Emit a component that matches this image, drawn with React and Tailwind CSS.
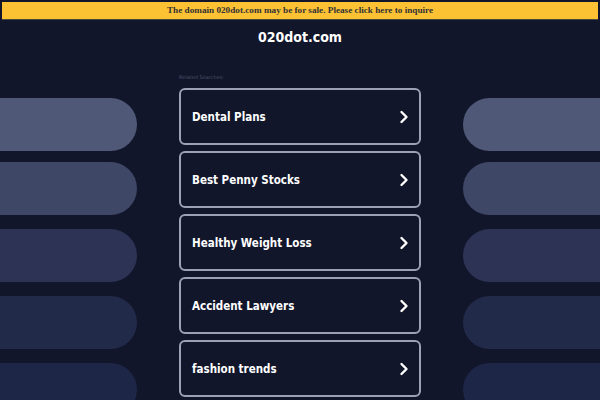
import React from 'react';

const searches = ['Dental Plans', 'Best Penny Stocks', 'Healthy Weight Loss', 'Accident Lawyers', 'fashion trends'];
const pillColors = ['bg-[#4f5877]', 'bg-[#3f4767]', 'bg-[#2c3355]', 'bg-[#222a4a]', 'bg-[#1e2647]'];

function Chevron() {
    return (
        <svg width="10" height="14" viewBox="0 0 10 14" fill="none">
            <path d="M2.5 2 L7.5 7 L2.5 12" stroke="white" strokeWidth="2.4" strokeLinecap="round" strokeLinejoin="round" />
        </svg>
    );
}

function PillColumn() {
    return (
        <div className="w-[250px] shrink-0 flex flex-col gap-[14px] pt-[98px]">
            {pillColors.map((c, i) => (
                <div key={i} className={`h-[53px] w-full rounded-full ${c} ${i === 1 ? '-mt-[3px]' : ''}`}></div>
            ))}
        </div>
    );
}

export default function App() {
    return (
        <div className="h-screen w-full overflow-hidden bg-[#12162b] relative font-['DejaVu_Sans_Condensed','DejaVu_Sans',sans-serif]">
            {/* Sale banner */}
            <div className="absolute top-[2px] left-[2px] right-[2px] h-[18px] bg-[#fdc234] border-b border-[#4a4a3a] flex items-center justify-center z-10">
                <span className="text-[9.2px] font-bold text-[#333] font-['Liberation_Serif',serif]">
                    The domain 020dot.com may be for sale. Please click here to inquire
                </span>
            </div>

            <div className="absolute top-[27px] left-0 right-0 text-center text-white font-bold text-[14px]">
                020dot.com
            </div>

            {/* Main columns */}
            <div className="flex justify-center gap-[42px]">
                <PillColumn />
                <div className="w-[242px] shrink-0 pt-[74px]">
                    <div className="text-[5px] text-[#4a5068] mb-[8px] h-[6px] leading-[6px] font-['DejaVu_Sans',sans-serif]">Related Searches:</div>
                    <div className="flex flex-col gap-[6px]">
                        {searches.map((s) => (
                            <div key={s} className="h-[57px] rounded-[6px] border-2 border-[#9da1b3] flex items-center justify-between pl-[11px] pr-[10px]">
                                <span className="text-white font-bold text-[11.5px] mt-[2px]">{s}</span>
                                <Chevron />
                            </div>
                        ))}
                    </div>
                </div>
                <PillColumn />
            </div>
        </div>
    );
}
